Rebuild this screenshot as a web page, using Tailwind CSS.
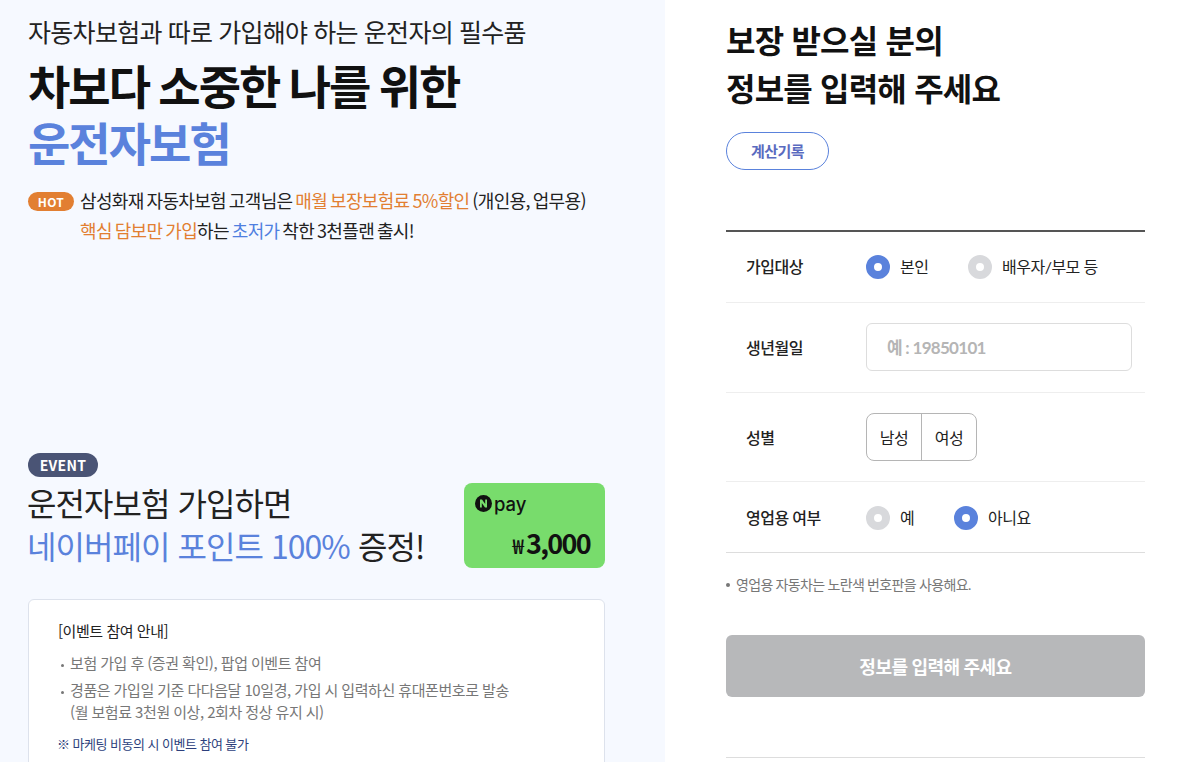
<!DOCTYPE html>
<html lang="ko">
<head>
<meta charset="utf-8">
<script src="https://cdn.jsdelivr.net/npm/@tailwindcss/browser@4"></script>
</head>
<body class="bg-white overflow-hidden font-['Lato','Noto_Sans_CJK_KR',sans-serif]">
<div class="flex h-[762px] overflow-hidden">
  <div class="w-[665px] shrink-0 bg-[#f6f9ff] pl-[28px] pr-[60px] overflow-hidden font-['Noto_Sans_CJK_KR',sans-serif]">
    <p class="mt-[13px] text-[25px] leading-[36px] tracking-[-0.7px] [word-spacing:-0.4px] text-[#222]">자동차보험과 따로 가입해야 하는 운전자의 필수품</p>
    <h1 class="mt-[7px] text-[46px] leading-[57px] font-bold tracking-[-1.95px] [word-spacing:-1.7px] text-[#111]">차보다 소중한 나를 위한<br><span class="text-[#5a82dc]">운전자보험</span></h1>
    <div class="mt-[15px] flex gap-[6px] h-[60px]">
      <span class="mt-[7px] w-[46px] h-[19px] rounded-full bg-[#e27f32] text-white text-[12px] font-bold flex items-center justify-center tracking-[0.3px]">HOT</span>
      <p class="text-[18px] leading-[30px] tracking-[-0.66px] [word-spacing:-1.5px] text-[#222]">삼성화재 자동차보험 고객님은 <span class="text-[#e27f32]">매월 보장보험료 5%할인</span> (개인용, 업무용)<br><span class="text-[#e27f32]">핵심 담보만 가입</span>하는 <span class="text-[#4f7fe0]">초저가</span> 착한 3천플랜 출시!</p>
    </div>
    <div class="mt-[208px] w-[70px] h-[24px] rounded-full bg-[#4a5475] text-white text-[14px] font-bold flex items-center justify-center tracking-[0.3px]">EVENT</div>
    <div class="flex justify-between w-[577px]">
      <p class="-ml-[1px] mt-[4px] text-[32px] leading-[43px] tracking-[-0.95px] text-[#222]">운전자보험 가입하면<br><span class="text-[#5a82dc]">네이버페이 포인트 100%</span> 증정!</p>
      <div class="mt-[6px] w-[141px] h-[85px] rounded-[8px] bg-[#78dc6c] pl-[11px] pr-[12px] pt-[10px] flex flex-col">
        <div class="flex items-center gap-[2px] h-[21px]">
          <svg width="17" height="17" viewBox="0 0 17 17"><circle cx="8.5" cy="8.5" r="8.5" fill="#111"/><path d="M5 12.5V4.5h2l3.2 4.4V4.5H12v8h-2L6.8 8.1v4.4z" fill="#78dc6c"/></svg>
          <span class="text-[18.5px] leading-[18px] font-medium text-[#111] font-['Inter',sans-serif]">pay</span>
        </div>
        <div class="mt-[12px] flex items-baseline justify-end gap-[2px] text-[#111] pr-[3px]">
          <span class="text-[20px] font-medium leading-[20px]">₩</span><span class="text-[27px] leading-[34px] font-bold tracking-[-1.7px]">3,000</span>
        </div>
      </div>
    </div>
    <div class="mt-[31px] w-[577px] h-[200px] bg-white border border-[#dde2ec] rounded-[6px] pl-[29px] pt-[20px]">
      <p class="text-[15px] leading-[22px] tracking-[-0.45px] text-[#222]">[이벤트 참여 안내]</p>
      <ul class="mt-[10px] text-[15px] leading-[22px] tracking-[-0.4px] [word-spacing:-0.4px] text-[#777]">
        <li class="flex"><span class="w-[12px] shrink-0 pl-[3px] pt-[12px]"><span class="block w-[3px] h-[3px] rounded-full bg-[#777]"></span></span>보험 가입 후 (증권 확인), 팝업 이벤트 참여</li>
        <li class="flex mt-[5px]"><span class="w-[12px] shrink-0 pl-[3px] pt-[12px]"><span class="block w-[3px] h-[3px] rounded-full bg-[#777]"></span></span><span>경품은 가입일 기준 다다음달 10일경, 가입 시 입력하신 휴대폰번호로 발송<br>(월 보험료 3천원 이상, 2회차 정상 유지 시)</span></li>
      </ul>
      <p class="-ml-[1px] mt-[10px] text-[13px] leading-[22px] tracking-[-0.4px] [word-spacing:-0.4px] text-[#2d3f7c]">※ 마케팅 비동의 시 이벤트 참여 불가</p>
    </div>
  </div>
  <div class="flex-1 pl-[61px] pr-[33px]">
    <h2 class="mt-[15px] text-[32px] leading-[48px] font-bold tracking-[-0.8px] text-[#111] font-['Noto_Sans_CJK_KR',sans-serif]">보장 받으실 분의<br>정보를 입력해 주세요</h2>
    <button class="mt-[21px] block w-[103px] h-[38px] rounded-full border border-[#5a82dc] text-[15px] font-bold tracking-[-0.6px] text-[#5a6bc0] bg-white">계산기록</button>
    <div class="mt-[60px] border-t-2 border-[#555] h-[73px] flex items-center border-b border-b-[#eee]">
      <span class="w-[140px] pl-[20px] text-[16px] font-medium tracking-[-0.5px] text-[#222]">가입대상</span>
      <span class="w-[24px] h-[24px] rounded-full border-[8px] border-[#5a82dc] bg-white"></span>
      <span class="ml-[10px] w-[68px] text-[16px] tracking-[-0.5px] text-[#222]">본인</span>
      <span class="w-[24px] h-[24px] rounded-full border-[8px] border-[#d8d9dc] bg-white"></span>
      <span class="ml-[10px] text-[16px] tracking-[-0.5px] text-[#222]">배우자/부모 등</span>
    </div>
    <div class="h-[90px] flex items-center border-b border-[#eee]">
      <span class="w-[140px] pl-[20px] text-[16px] font-medium tracking-[-0.5px] text-[#222]">생년월일</span>
      <div class="mb-[2px] w-[266px] h-[48px] pt-[2px] rounded-[6px] border border-[#ddd] flex items-center pl-[20px] text-[17px] font-bold tracking-[-0.7px] text-[#b5b5b5]">예 : 19850101</div>
    </div>
    <div class="h-[89px] flex items-center border-b border-[#eee]">
      <span class="mt-[2px] w-[140px] pl-[20px] text-[16px] font-medium tracking-[-0.5px] text-[#222]">성별</span>
      <div class="w-[111px] h-[48px] rounded-[8px] border border-[#b5b5b5] flex text-[16px] tracking-[-0.5px] text-[#222]">
        <span class="pt-[1px] flex-1 flex items-center justify-center border-r border-[#b5b5b5]">남성</span>
        <span class="pt-[1px] flex-1 flex items-center justify-center">여성</span>
      </div>
    </div>
    <div class="h-[71px] pt-[2px] flex items-center border-b border-[#ddd]">
      <span class="w-[140px] pl-[20px] text-[16px] font-medium tracking-[-0.5px] text-[#222]">영업용 여부</span>
      <span class="w-[24px] h-[24px] rounded-full border-[8px] border-[#d8d9dc] bg-white"></span>
      <span class="ml-[10px] w-[54px] text-[16px] tracking-[-0.5px] text-[#222]">예</span>
      <span class="w-[24px] h-[24px] rounded-full border-[8px] border-[#5a82dc] bg-white"></span>
      <span class="ml-[10px] text-[16px] tracking-[-0.5px] text-[#222]">아니요</span>
    </div>
    <p class="mt-[21px] flex items-center text-[14px] leading-[22px] tracking-[-0.65px] text-[#777]"><span class="w-[4px] h-[4px] rounded-full bg-[#777] mr-[6px]"></span>영업용 자동차는 노란색 번호판을 사용해요.</p>
    <button class="mt-[39px] block w-full h-[62px] pt-[2px] rounded-[6px] bg-[#b7b8ba] text-white text-[18px] font-bold tracking-[-0.5px]">정보를 입력해 주세요</button>
    <div class="mt-[60px] border-t border-[#ddd]"></div>
  </div>
</div>
</body>
</html>
